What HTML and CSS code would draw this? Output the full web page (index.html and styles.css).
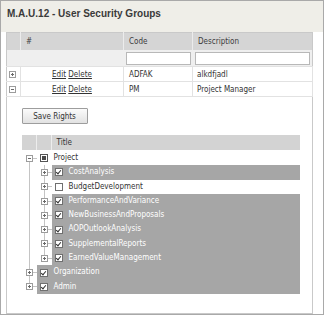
FILE: index.html
```html
<!DOCTYPE html>
<html lang="en">
<head>
    <meta charset="UTF-8">
    <title>User Security Groups</title>
    <link rel="stylesheet" href="styles.css">
</head>
<body>
    <div class="window">
        <div class="titlebar">M.A.U.12 - User Security Groups</div>
        <div class="content">
            <table class="grid">
                <colgroup>
                    <col class="c-exp">
                    <col class="c-num">
                    <col class="c-code">
                    <col class="c-desc">
                </colgroup>
                <thead>
                    <tr class="head">
                        <th></th>
                        <th>#</th>
                        <th>Code</th>
                        <th>Description</th>
                    </tr>
                    <tr class="filter">
                        <td></td>
                        <td></td>
                        <td><input type="text"></td>
                        <td><input type="text"></td>
                    </tr>
                </thead>
                <tbody>
                    <tr class="row">
                        <td><span class="exp plus"></span></td>
                        <td class="actions"><a href="#">Edit</a> <a href="#">Delete</a></td>
                        <td>ADFAK</td>
                        <td>alkdfjadl</td>
                    </tr>
                    <tr class="row">
                        <td><span class="exp minus"></span></td>
                        <td class="actions"><a href="#">Edit</a> <a href="#">Delete</a></td>
                        <td>PM</td>
                        <td>Project Manager</td>
                    </tr>
                    <tr class="detail">
                        <td></td>
                        <td colspan="3">
                            <button class="btn">Save Rights</button>

                            <!-- Rights tree -->
                            <div class="tree">
                                <div class="tree-head">
                                    <div class="th-cell"></div>
                                    <div class="th-cell"></div>
                                    <div class="th-title">Title</div>
                                </div>

                                <div class="node">
                                    <span class="gut first"><span class="exp minus"></span></span>
                                    <span class="label"><span class="cb part"></span>Project</span>
                                </div>
                                <div class="node">
                                    <span class="gut pass"></span>
                                    <span class="gut mid"><span class="exp plus"></span></span>
                                    <span class="label sel"><span class="cb on"></span>CostAnalysis</span>
                                </div>
                                <div class="node">
                                    <span class="gut pass"></span>
                                    <span class="gut mid"><span class="exp plus"></span></span>
                                    <span class="label"><span class="cb"></span>BudgetDevelopment</span>
                                </div>
                                <div class="node">
                                    <span class="gut pass"></span>
                                    <span class="gut mid"><span class="exp plus"></span></span>
                                    <span class="label sel"><span class="cb on"></span>PerformanceAndVariance</span>
                                </div>
                                <div class="node">
                                    <span class="gut pass"></span>
                                    <span class="gut mid"><span class="exp plus"></span></span>
                                    <span class="label sel"><span class="cb on"></span>NewBusinessAndProposals</span>
                                </div>
                                <div class="node">
                                    <span class="gut pass"></span>
                                    <span class="gut mid"><span class="exp plus"></span></span>
                                    <span class="label sel"><span class="cb on"></span>AOPOutlookAnalysis</span>
                                </div>
                                <div class="node">
                                    <span class="gut pass"></span>
                                    <span class="gut mid"><span class="exp plus"></span></span>
                                    <span class="label sel"><span class="cb on"></span>SupplementalReports</span>
                                </div>
                                <div class="node">
                                    <span class="gut pass"></span>
                                    <span class="gut last"><span class="exp plus"></span></span>
                                    <span class="label sel"><span class="cb on"></span>EarnedValueManagement</span>
                                </div>
                                <div class="node">
                                    <span class="gut mid"><span class="exp plus"></span></span>
                                    <span class="label sel"><span class="cb on"></span>Organization</span>
                                </div>
                                <div class="node">
                                    <span class="gut last"><span class="exp plus"></span></span>
                                    <span class="label sel"><span class="cb on"></span>Admin</span>
                                </div>
                            </div>
                        </td>
                    </tr>
                </tbody>
            </table>
        </div>
    </div>
</body>
</html>
```

FILE: styles.css
```css
body {
    margin: 0;
    font-family: "DejaVu Sans Condensed", "Liberation Sans", Arial, sans-serif;
    font-size: 8px;
    color: #333;
}

.window {
    width: 324px;
    height: 315px;
    box-sizing: border-box;
    border: 1px solid #a9a9a9;
    background: #fff;
}

.titlebar {
    height: 31px;
    box-sizing: border-box;
    padding: 7px 0 0 6px;
    background: #efeee8;
    font-family: "Liberation Sans", Arial, sans-serif;
    font-size: 10px;
    font-weight: bold;
    line-height: 12px;
    color: #3a3a3a;
}

.content {
    padding-left: 5px;
}

/* Main grid */
.grid {
    width: 307px;
    table-layout: fixed;
    border-collapse: collapse;
    border: 1px solid #c9c9c9;
}

.c-exp { width: 14px; }
.c-num { width: 103px; }
.c-code { width: 69px; }

.grid th {
    height: 17px;
    padding: 0 0 0 5px;
    background: #d5d5d5;
    border-left: 1px solid #ececec;
    text-align: left;
    font-weight: normal;
    color: #3c3c3c;
}

.grid th:first-child {
    border-left: none;
}

.filter td {
    height: 16px;
    padding: 0 2px;
    background: #efefef;
}

.filter input {
    display: block;
    width: 100%;
    height: 13px;
    box-sizing: border-box;
    border: 1px solid #b8b8b8;
    background: #fff;
    margin: 0;
}

.row td {
    height: 14px;
    padding: 0 0 0 5px;
    border: 1px solid #e2e2e2;
    white-space: nowrap;
}

.row td:first-child {
    padding-left: 2px;
    border-left: none;
}

.row td:last-child {
    padding-left: 4px;
}

.row .actions {
    text-align: center;
    padding-left: 0;
}

.actions a {
    color: #333;
}

.exp {
    display: inline-block;
    vertical-align: middle;
    width: 7px;
    height: 7px;
    box-sizing: border-box;
    border: 1px solid #9c9c9c;
    background: linear-gradient(#6a6a6a, #6a6a6a) center / 3px 1px no-repeat, #fff;
}

.exp.plus {
    background: linear-gradient(#6a6a6a, #6a6a6a) center / 3px 1px no-repeat,
                linear-gradient(#6a6a6a, #6a6a6a) center / 1px 3px no-repeat, #fff;
}

/* Detail row */
.detail td {
    height: 205px;
    padding: 11px 0 0 1px;
    vertical-align: top;
}

.btn {
    display: block;
    width: 66px;
    height: 16px;
    padding: 0;
    border: 1px solid #9d9d9d;
    border-radius: 1px;
    background: linear-gradient(#fbfbfb, #e2e2e2);
    font-family: inherit;
    font-size: 8px;
    color: #333;
}

.tree {
    width: 278px;
    margin-top: 11px;
}

.tree-head {
    display: flex;
    height: 15px;
    background: #d3d3d3;
    line-height: 15px;
    margin-bottom: 1px;
}

.th-cell {
    width: 14px;
    border-right: 1px solid #ededed;
}

.th-title {
    padding-left: 5px;
}

.node {
    display: flex;
    height: 14.3px;
    line-height: 14.3px;
}

/* tree connector lines */
.gut {
    display: flex;
    align-items: center;
    justify-content: center;
    width: 15px;
    flex: none;
}

.gut.pass {
    background: linear-gradient(#c4c4c4, #c4c4c4) 7px 0 / 1px 100% no-repeat;
}

.gut.mid {
    background: linear-gradient(#c4c4c4, #c4c4c4) 7px 0 / 1px 100% no-repeat,
                linear-gradient(#c4c4c4, #c4c4c4) 7px 50% / 8px 1px no-repeat;
}

.gut.first {
    background: linear-gradient(#c4c4c4, #c4c4c4) 7px 100% / 1px 50% no-repeat,
                linear-gradient(#c4c4c4, #c4c4c4) 7px 50% / 8px 1px no-repeat;
}

.gut.last {
    background: linear-gradient(#c4c4c4, #c4c4c4) 7px 0 / 1px 50% no-repeat,
                linear-gradient(#c4c4c4, #c4c4c4) 7px 50% / 8px 1px no-repeat;
}

.label {
    flex: 1;
    display: flex;
    align-items: center;
    padding-left: 3px;
    white-space: nowrap;
}

.label.sel {
    background: #a6a6a6;
    color: #fff;
}

.cb {
    display: inline-block;
    width: 8px;
    height: 8px;
    box-sizing: border-box;
    margin-right: 6px;
    border: 1px solid #6f6f6f;
    background: #fff;
    flex: none;
}

.cb.part {
    border-color: #555;
    background: linear-gradient(#4a4a4a, #4a4a4a) center / 4px 4px no-repeat, #fff;
}

.cb.on::after {
    content: "";
    display: block;
    width: 2px;
    height: 4px;
    margin: 0 0 0 1.5px;
    border-right: 1.3px solid #333;
    border-bottom: 1.3px solid #333;
    transform: rotate(40deg);
}
```
